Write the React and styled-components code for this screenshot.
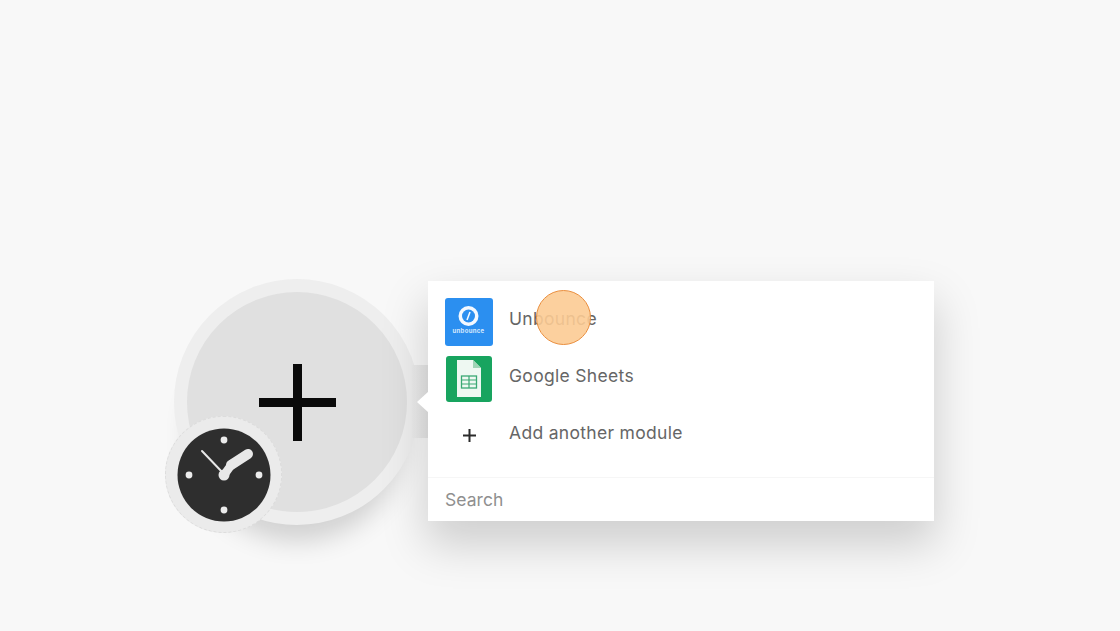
import React from 'react'
import styled, { createGlobalStyle } from 'styled-components'

const GlobalStyle = createGlobalStyle`
  html, body {
    margin: 0;
    padding: 0;
    background: #f8f8f8;
    font-family: Inter, "Liberation Sans", sans-serif;
  }
`

const Canvas = styled.div`
  position: relative;
  width: 1120px;
  height: 631px;
  overflow: hidden;
  background: #f8f8f8;
`

const ModuleNode = styled.div`
  position: absolute;
  left: 174px;
  top: 279px;
  width: 246px;
  height: 246px;
  box-sizing: border-box;
  border: 13px solid #eeeeee;
  border-radius: 50%;
  background: #e0e0e0;
  display: flex;
  align-items: center;
  justify-content: center;
  box-shadow: 0 32px 26px -16px rgba(0, 0, 0, 0.16);
`

const Connector = styled.div`
  position: absolute;
  left: 412px;
  top: 365px;
  width: 17px;
  height: 73px;
  background: linear-gradient(to right, #ececec, #e4e4e4);
`

const Arrow = styled.div`
  position: absolute;
  left: 417px;
  top: 391px;
  width: 0;
  height: 0;
  border-top: 11px solid transparent;
  border-bottom: 11px solid transparent;
  border-right: 12px solid #fff;
`

const TriggerBadge = styled.div`
  position: absolute;
  left: 165px;
  top: 416px;
  width: 117px;
  height: 117px;
  box-sizing: border-box;
  border-radius: 50%;
  background: #ebebeb;
  border: 1px dashed #dcdcdc;
  display: flex;
  align-items: center;
  justify-content: center;
`

const Menu = styled.div`
  position: absolute;
  left: 428px;
  top: 281px;
  width: 506px;
  height: 240px;
  background: #fff;
  display: flex;
  flex-direction: column;
  box-shadow: 0 22px 42px 2px rgba(0, 0, 0, 0.17);
`

const ModuleList = styled.div`
  flex: 1;
  padding: 9px 17px 0;
  display: flex;
  flex-direction: column;
`

const Row = styled.div`
  height: 57px;
  display: flex;
  align-items: center;
  gap: 16px;
  font-size: 17.5px;
  letter-spacing: 0.31px;
  color: #666666;
`

const IconSlot = styled.div`
  width: 48px;
  height: 48px;
  display: flex;
  align-items: center;
  justify-content: center;
  color: #2b2b2b;
  margin-top: ${props => props.$shift || 0}px;
`

const SearchBar = styled.div`
  height: 43px;
  padding: 0 17px;
  display: flex;
  align-items: center;
  border-top: 1px solid #f6f6f6;
  font-size: 17.5px;
  letter-spacing: 0.05px;
  color: #8f8f8f;
`

const Cursor = styled.div`
  position: absolute;
  left: 536px;
  top: 290px;
  width: 55px;
  height: 55px;
  box-sizing: border-box;
  border-radius: 50%;
  border: 1px solid #ea8f3f;
  background: rgba(252, 203, 148, 0.9);
`

const ClockIcon = () => (
  <svg width="94" height="94" viewBox="0 0 94 94">
    <circle cx="47" cy="47" r="46.5" fill="#2e2e2e" />
    <circle cx="47" cy="12" r="3.4" fill="#ececec" />
    <circle cx="47" cy="82" r="3.4" fill="#ececec" />
    <circle cx="12" cy="47" r="3.4" fill="#ececec" />
    <circle cx="82" cy="47" r="3.4" fill="#ececec" />
    <path d="M25 23 L47 46" stroke="#e8e8e8" strokeWidth="2" strokeLinecap="round" />
    <path d="M47 47 L55 36" stroke="#e8e8e8" strokeWidth="8.5" strokeLinecap="round" />
    <path d="M54 37 L71 26" stroke="#e8e8e8" strokeWidth="10" strokeLinecap="round" />
    <circle cx="47" cy="47" r="5.5" fill="#e8e8e8" />
  </svg>
)

const UnbounceIcon = () => (
  <svg width="48" height="48" viewBox="0 0 48 48">
    <rect width="48" height="48" rx="3" fill="#2b8ff0" />
    <circle cx="23.5" cy="18" r="10" fill="#f4f9ff" />
    <circle cx="23.5" cy="18" r="6.5" fill="#2b8ff0" />
    <path d="M25 14 L22 22" stroke="#f4f9ff" strokeWidth="1.6" />
    <text x="23.5" y="35" fontSize="6" fontWeight="700" fontFamily="Inter, sans-serif" fill="#d7e9fc" textAnchor="middle">unbounce</text>
  </svg>
)

const SheetsIcon = () => (
  <svg width="46" height="46" viewBox="0 0 46 46">
    <rect width="46" height="46" rx="3" fill="#18a45f" />
    <path d="M11 4 H27 L35 12 V41 H11 Z" fill="#eef8f2" />
    <path d="M27 4 L35 12 H27 Z" fill="#9fd4b6" />
    <rect x="15.5" y="20" width="15" height="12" fill="none" stroke="#3aa873" strokeWidth="1.3" />
    <path d="M15.5 24 H30.5 M15.5 28 H30.5 M23 20 V32" stroke="#3aa873" strokeWidth="1.2" />
  </svg>
)

const PlusIcon = ({ size, weight, color }) => (
  <svg width={size} height={size} viewBox={`0 0 ${size} ${size}`}>
    <path
      d={`M${size / 2} 0 V${size} M0 ${size / 2} H${size}`}
      stroke={color}
      strokeWidth={weight}
    />
  </svg>
)

export default function App() {
  return (
    <Canvas>
      <GlobalStyle />
      <ModuleNode>
        <PlusIcon size={77} weight={9} color="#0a0a0a" />
      </ModuleNode>
      <Connector />
      <TriggerBadge>
        <ClockIcon />
      </TriggerBadge>
      <Menu>
        <ModuleList>
          <Row>
            <IconSlot $shift={6}><UnbounceIcon /></IconSlot>
            Unbounce
          </Row>
          <Row>
            <IconSlot $shift={6}><SheetsIcon /></IconSlot>
            Google Sheets
          </Row>
          <Row>
            <IconSlot $shift={6}><PlusIcon size={13} weight={2} color="#2b2b2b" /></IconSlot>
            Add another module
          </Row>
        </ModuleList>
        <SearchBar>Search</SearchBar>
      </Menu>
      <Arrow />
      <Cursor />
    </Canvas>
  )
}
